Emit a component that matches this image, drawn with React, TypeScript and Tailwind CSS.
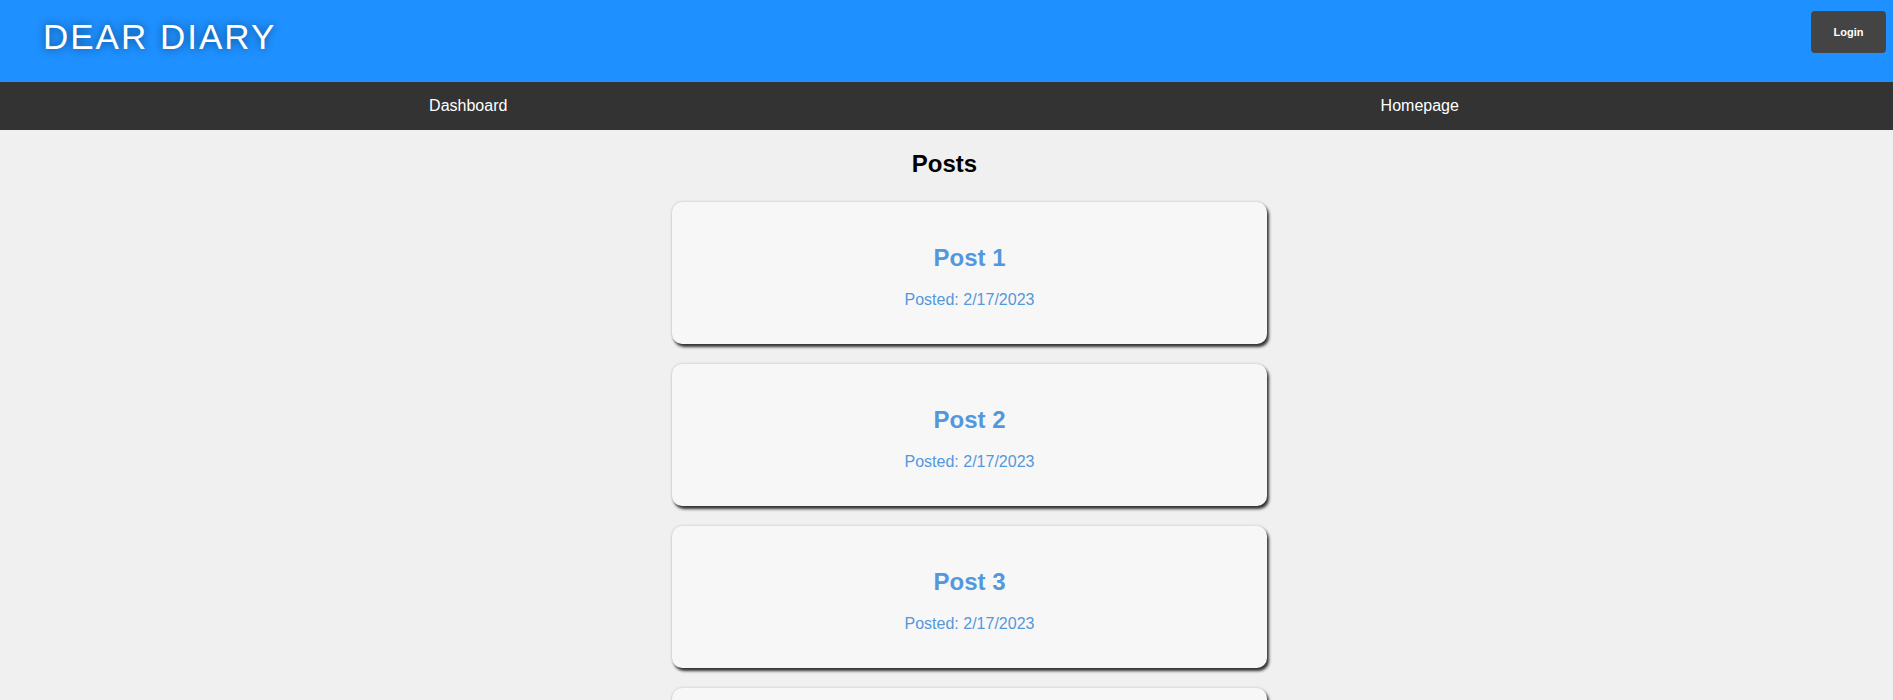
const POSTS = [
  { id: 1, title: "Post 1", date: "2/17/2023" },
  { id: 2, title: "Post 2", date: "2/17/2023" },
  { id: 3, title: "Post 3", date: "2/17/2023" },
  { id: 4, title: "Post 4", date: "2/17/2023" },
];

function Header() {
  return (
    <header className="flex h-[82px] items-start justify-between bg-[#1e90ff] pl-[43px] pr-[7px]">
      <h1 className="mt-[17px] text-[35px] leading-[40px] tracking-[2px] text-white [text-shadow:0_0_9px_rgba(0,0,0,0.5)]">
        DEAR DIARY
      </h1>
      <button className="mt-[11px] h-[42px] w-[75px] rounded-[4px] bg-[#444444] text-[11px] font-bold text-white">
        Login
      </button>
    </header>
  );
}

function Nav() {
  return (
    <nav className="grid h-[48px] grid-cols-2 items-center bg-[#333333] text-[16px] text-white">
      <a className="pr-[10px] text-center">Dashboard</a>
      <a className="text-center">Homepage</a>
    </nav>
  );
}

function PostCard({ post }: { post: (typeof POSTS)[number] }) {
  return (
    <div className="flex h-[142px] w-[595px] flex-col items-center rounded-[10px] bg-[#f7f7f7] pt-[42px] text-[#5398dc] shadow-[2px_3px_3px_#333,0_0_3px_rgba(0,0,0,0.2)]">
      <h2 className="text-[24px] font-bold leading-[28px]">{post.title}</h2>
      <p className="mt-[19px] text-[16px] leading-[18px]">Posted: {post.date}</p>
    </div>
  );
}

export default function App() {
  return (
    <div className="min-h-[700px] bg-[#f0f0f0] font-['Liberation_Sans',Arial,sans-serif]">
      <Header />
      <Nav />
      <main className="flex flex-col items-center">
        <h2 className="mt-[20px] pr-[4px] text-[24px] font-bold leading-[28px] text-black">Posts</h2>
        <div className="mx-auto mt-[24px] flex w-[641px] flex-col gap-[20px] pb-[20px] pl-[46px]">
          {POSTS.map((p) => (
            <PostCard key={p.id} post={p} />
          ))}
        </div>
      </main>
    </div>
  );
}
